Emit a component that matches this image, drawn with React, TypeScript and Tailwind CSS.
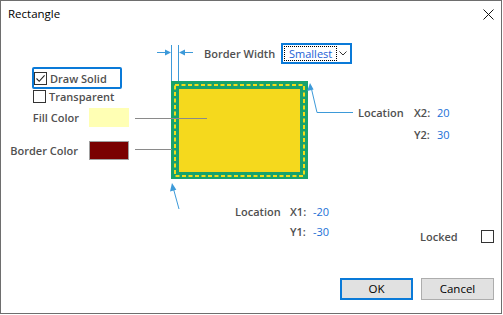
import React from 'react';

const label = "font-semibold text-[#505050]";
const value = "text-[#1a6fd6]";

function Check({ checked = false }: { checked?: boolean }) {
  return (
    <span className="w-[13px] h-[13px] border border-[#333] bg-white flex items-center justify-center shrink-0">
      {checked && (
        <svg width="11" height="11" viewBox="0 0 11 11">
          <path d="M1.5 5.5 L4.2 8.3 L9.6 2.3" fill="none" stroke="#222" strokeWidth="1.1" />
        </svg>
      )}
    </span>
  );
}

// drawing of the rectangle, the width marks and the leader lines
function Diagram() {
  const blue = "#3d9ad9";
  return (
    <svg className="absolute inset-0 pointer-events-none" width="220" height="251" viewBox="0 0 220 251">
      {/* border width marks */}
      <line x1="36.5" y1="18" x2="36.5" y2="54" stroke={blue} />
      <line x1="43.5" y1="18" x2="43.5" y2="54" stroke={blue} />
      <line x1="22" y1="25.5" x2="33" y2="25.5" stroke={blue} />
      <polygon points="36,25.5 30,22.5 30,28.5" fill={blue} />
      <line x1="47" y1="25.5" x2="58" y2="25.5" stroke={blue} />
      <polygon points="44,25.5 50,22.5 50,28.5" fill={blue} />

      {/* rectangle */}
      <rect x="36" y="54" width="137" height="98" fill="#17a26c" />
      <rect x="44" y="62" width="121" height="83" fill="#f5d91d" />
      <rect x="40" y="58" width="129" height="91" fill="none" stroke="#f2dc1a" strokeWidth="2" strokeDasharray="4 2.5" />

      {/* colour leader lines */}
      <line x1="0" y1="91.5" x2="72" y2="91.5" stroke="#8a8a8a" />
      <line x1="0" y1="122.5" x2="37" y2="122.5" stroke="#8a8a8a" />

      {/* X2/Y2 pointer */}
      <polyline points="218,85.5 182,85.5 176.5,62" fill="none" stroke={blue} />
      <polygon points="175,56 172.2,64 178.6,62.6" fill={blue} />

      {/* X1/Y1 pointer */}
      <line x1="44" y1="182" x2="38.5" y2="162" stroke={blue} />
      <polygon points="37,156 35,164.5 41.3,162.8" fill={blue} />
    </svg>
  );
}

export default function App() {
  return (
    <div className="w-[503px] h-[315px] bg-white text-[11px] leading-none text-black font-['Open_Sans','Noto_Sans',sans-serif]">
      <div className="w-[502px] h-[314px] border border-[#6e6e6e] flex flex-col">
        {/* title bar */}
        <div className="h-[26px] flex items-center justify-between pl-[7px] pr-[7px] shrink-0">
          <span className="text-[11.5px]">Rectangle</span>
          <svg width="11" height="11" viewBox="0 0 11 11">
            <path d="M0.5 0.5 L10.5 10.5 M10.5 0.5 L0.5 10.5" stroke="#111" strokeWidth="1" />
          </svg>
        </div>

        {/* body */}
        <div className="flex h-[251px] shrink-0">
          {/* left column */}
          <div className="w-[134px] pt-[40px] flex flex-col">
            <div className="ml-[31px] w-[90px] h-[22px] border-2 border-[#0a7ad8] rounded-[2px] flex items-center">
              <Check checked />
              <span className={`${label} ml-[3px] text-[#404040]`}>Draw Solid</span>
            </div>
            <div className="ml-[32px] h-[14px] mt-[0px] flex items-center">
              <Check />
              <span className={`${label} ml-[3px] text-[#404040]`}>Transparent</span>
            </div>
            <div className="flex items-center mt-[5px] h-[19px]">
              <span className={`${label} w-[78px] text-right`}>Fill Color</span>
              <span className="ml-[10px] w-[40px] h-[19px] bg-[#ffffb4]" />
            </div>
            <div className="flex items-center mt-[14px] h-[19px]">
              <span className={`${label} w-[77px] text-right`}>Border Color</span>
              <span className="ml-[11px] w-[40px] h-[19px] bg-[#7a0000] border border-[#a0a0a0]" />
            </div>
          </div>

          {/* middle column with the drawing */}
          <div className="w-[220px] relative flex flex-col">
            <Diagram />
            <div className="relative flex items-center mt-[16px] h-[21px]">
              <span className={`${label} ml-[69px]`}>Border Width</span>
              <div className="ml-auto mr-[3px] w-[71px] h-[21px] border-2 border-[#0a7ad8] flex items-center pl-[1px] pr-[3px]">
                <span className="h-[15px] px-[4px] flex items-center border border-dotted border-black text-[#1a5fd6]">Smallest</span>
                <svg className="ml-auto" width="8" height="5" viewBox="0 0 8 5">
                  <path d="M0.5 0.5 L4 4 L7.5 0.5" fill="none" stroke="#333" />
                </svg>
              </div>
            </div>
            <div className="relative mt-[137px] grid grid-cols-[55px_23px_auto] ml-[100px] auto-rows-[20px] items-center">
              <span className={label}>Location</span>
              <span className={label}>X1:</span>
              <span className={value}>-20</span>
              <span />
              <span className={label}>Y1:</span>
              <span className={value}>-30</span>
            </div>
          </div>

          {/* right column */}
          <div className="flex-1 flex flex-col pt-[74px]">
            <div className="grid grid-cols-[56px_23px_auto] ml-[3px] auto-rows-[22px] items-center">
              <span className={label}>Location</span>
              <span className={label}>X2:</span>
              <span className={value}>20</span>
              <span />
              <span className={label}>Y2:</span>
              <span className={value}>30</span>
            </div>
            <div className="mt-[80px] h-[22px] flex items-center pl-[65px] pr-[7px]">
              <span className={label}>Locked</span>
              <span className="ml-auto"><Check /></span>
            </div>
          </div>
        </div>

        {/* buttons */}
        <div className="flex justify-end gap-[8px] pr-[7px] mt-auto mb-[13px]">
          <button className="w-[73px] h-[22px] bg-[#e1e1e1] border-2 border-[#0a7ad8] text-[11.5px]">OK</button>
          <button className="w-[73px] h-[22px] bg-[#e1e1e1] border border-[#adadad] text-[11.5px]">Cancel</button>
        </div>
      </div>
    </div>
  );
}
